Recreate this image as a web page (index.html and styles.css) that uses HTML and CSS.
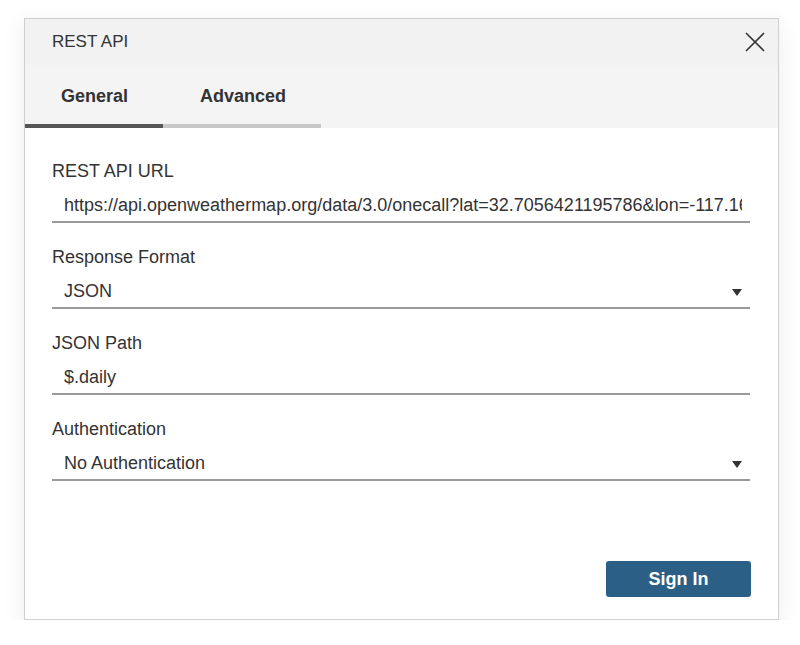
FILE: index.html
```html
<!DOCTYPE html>
<html lang="en">
<head>
    <meta charset="UTF-8">
    <title>REST API</title>
    <link rel="stylesheet" href="styles.css">
</head>
<body>
    <div class="dialog">
        <div class="dialog-header">
            <span class="dialog-title">REST API</span>
            <button class="close-button" aria-label="Close">
                <svg width="20" height="20" viewBox="0 0 20 20">
                    <path d="M1 1 L19 19 M19 1 L1 19" stroke="#333" stroke-width="1.6" fill="none"/>
                </svg>
            </button>
        </div>
        <div class="tabs">
            <div class="tab active">General</div>
            <div class="tab">Advanced</div>
        </div>
        <div class="dialog-body">
            <div class="field">
                <label>REST API URL</label>
                <div class="field-input">
                    <span class="field-value">https://api.openweathermap.org/data/3.0/onecall?lat=32.7056421195786&amp;lon=-117.1610838</span>
                </div>
            </div>
            <div class="field">
                <label>Response Format</label>
                <div class="field-input">
                    <span class="field-value">JSON</span>
                    <span class="caret"></span>
                </div>
            </div>
            <div class="field">
                <label>JSON Path</label>
                <div class="field-input">
                    <span class="field-value">$.daily</span>
                </div>
            </div>
            <div class="field">
                <label>Authentication</label>
                <div class="field-input">
                    <span class="field-value">No Authentication</span>
                    <span class="caret"></span>
                </div>
            </div>
        </div>
        <div class="dialog-footer">
            <button class="sign-in">Sign In</button>
        </div>
    </div>
</body>
</html>
```

FILE: styles.css
```css
body {
    margin: 0;
    background: #fff;
    font-family: 'Liberation Sans', Arial, sans-serif;
    color: #333;
}

.dialog {
    margin: 18px 0 0 24px;
    width: 755px;
    height: 602px;
    box-sizing: border-box;
    border: 1px solid #cfcfcf;
    background: #fff;
    box-shadow: 0 6px 22px rgba(0,0,0,0.08);
    display: flex;
    flex-direction: column;
}

.dialog-header {
    height: 46px;
    background: #f2f2f2;
    display: flex;
    align-items: center;
    justify-content: space-between;
    padding: 0 13px 0 27px;
}

.dialog-title {
    font-size: 17px;
    color: #333;
}

.close-button {
    background: none;
    border: none;
    padding: 0;
    width: 20px;
    height: 20px;
    cursor: pointer;
}

.tabs {
    height: 63px;
    background: #f4f4f4;
    display: flex;
    align-items: stretch;
}

.tab {
    font-size: 18px;
    font-weight: bold;
    color: #333;
    display: flex;
    align-items: center;
    padding-top: 3px;
    box-sizing: border-box;
    border-bottom: 4px solid #c8c8c8;
}

.tab:first-child {
    width: 138px;
    padding-left: 36px;
}

.tab:nth-child(2) {
    width: 158px;
    padding-left: 37px;
}

.tab.active {
    border-bottom-color: #555;
}

.dialog-body {
    padding: 32px 28px 0 27px;
    display: flex;
    flex-direction: column;
    gap: 23px;
}

.field label {
    display: block;
    font-size: 18px;
    color: #333;
    line-height: 22px;
    margin-bottom: 11px;
}

.field-input {
    display: flex;
    align-items: flex-start;
    height: 27px;
    padding: 1px 8px 0 12px;
    border-bottom: 2px solid #9a9a9a;
    box-sizing: content-box;
}

.field-value {
    flex: 1;
    font-size: 18px;
    color: #333;
    white-space: nowrap;
    overflow: hidden;
    text-overflow: clip;
    line-height: 22px;
}

.caret {
    width: 0;
    height: 0;
    border-left: 5px solid transparent;
    border-right: 5px solid transparent;
    border-top: 7px solid #333;
    margin-top: 9px;
}

.dialog-footer {
    margin-top: auto;
    display: flex;
    justify-content: flex-end;
    padding: 0 27px 22px 0;
}

.sign-in {
    width: 145px;
    height: 36px;
    background: #2b5f85;
    color: #fff;
    border: none;
    border-radius: 3px;
    font-family: 'Liberation Sans', Arial, sans-serif;
    font-size: 18px;
    font-weight: bold;
    cursor: pointer;
}
```
